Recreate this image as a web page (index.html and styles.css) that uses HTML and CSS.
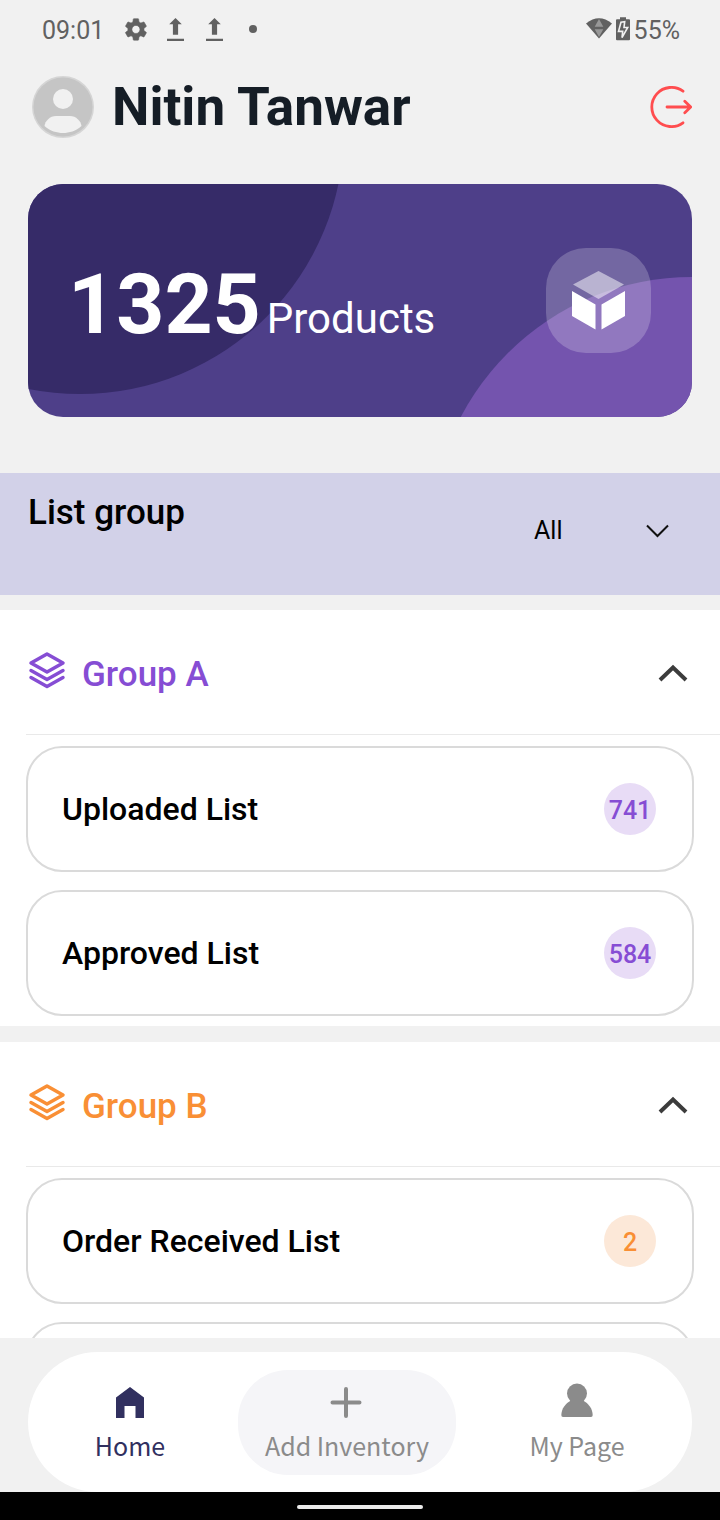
FILE: index.html
```html
<!DOCTYPE html>
<html lang="en">
<head>
<meta charset="utf-8">
<meta name="viewport" content="width=device-width, initial-scale=1">
<title>Inventory</title>
<link rel="stylesheet" href="styles.css">
</head>
<body>
<div class="app">
  <div class="status">
    <span class="status-time">09:01</span>
    <div class="status-icons">
      <svg class="status-icon" viewBox="0 0 26 26" aria-hidden="true"><path transform="translate(-.5 -2) scale(1.12)" fill="currentColor" stroke="currentColor" stroke-width=".5" d="M19.14 12.94c.04-.3.06-.61.06-.94 0-.32-.02-.64-.07-.94l2.03-1.58a.49.49 0 0 0 .12-.61l-1.92-3.32a.488.488 0 0 0-.59-.22l-2.39.96c-.5-.38-1.03-.7-1.62-.94l-.36-2.54a.484.484 0 0 0-.48-.41h-3.84c-.24 0-.43.17-.47.41l-.36 2.54c-.59.24-1.13.57-1.62.94l-2.39-.96c-.22-.08-.47 0-.59.22L2.740 8.870c-.12.21-.08.47.12.61l2.030 1.580c-.05.3-.09.63-.09.94s.02.64.07.94l-2.030 1.580a.49.49 0 0 0-.12.61l1.920 3.320c.12.22.37.29.59.22l2.390-.96c.5.38 1.030.7 1.620.94l.36 2.540c.05.24.24.41.48.41h3.840c.24 0 .44-.17.47-.41l.36-2.540c.59-.24 1.130-.56 1.620-.94l2.390.96c.22.08.47 0 .59-.22l1.920-3.320c.12-.22.07-.47-.12-.61l-2.010-1.580zM12 15.600c-1.980 0-3.600-1.620-3.600-3.600s1.620-3.600 3.600-3.600 3.600 1.620 3.600 3.600-1.620 3.600-3.600 3.600z"/></svg>
      <svg class="status-icon" viewBox="0 0 26 26" aria-hidden="true"><path fill="currentColor" d="M13.500 0l6.300 6.200h-3.700v10.600h-5.200V6.200H7.200zM5 20.700h17v2.200H5z"/></svg>
      <svg class="status-icon" viewBox="0 0 26 26" aria-hidden="true"><path fill="currentColor" d="M13.500 0l6.300 6.200h-3.700v10.600h-5.200V6.200H7.200zM5 20.700h17v2.200H5z"/></svg>
      <svg class="status-icon" viewBox="0 0 26 26" aria-hidden="true"><circle cx="13" cy="11" r="4" fill="currentColor"/></svg>
    </div>
    <div class="status-right">
      <svg class="wifi" viewBox="0 0 26 26" aria-hidden="true"><path fill="currentColor" d="M0 5.500Q13-5 26 5.500L13 20.500z"/><path fill="#989898" d="M13 1l4.300 7.700H8.700zM8.700 11.200h8.600L13 19z"/></svg>
      <svg class="battery" viewBox="0 0 14 26" aria-hidden="true"><path fill="currentColor" d="M4-.8h6v2h3q1 0 1 1v19q0 1-1 1H1q-1 0-1-1v-19q0-1 1-1h3z"/><path fill="none" stroke="#f1f1f1" stroke-width="1.600" d="M8.700 3.700L8 9.500h3.700L6 19.700l.7-6.300H2.500L5 4.200z"/></svg>
      <span>55%</span>
    </div>
  </div>

  <header class="header">
    <svg class="avatar" viewBox="0 0 62 62" aria-hidden="true"><circle cx="31" cy="31" r="31" fill="#d5d5d5"/><circle cx="31" cy="31" r="29.500" fill="#c5c5c5"/><circle cx="31" cy="23" r="10" fill="#f1f1f1"/><path fill="#f1f1f1" d="M24 40h14c6 0 11 5 11.500 10C44 55 37 57 31 57s-13-2-18.500-7C13 45 18 40 24 40z"/></svg>
    <h1 class="name">Nitin Tanwar</h1>
    <button class="logout" type="button" aria-label="Log out">
      <svg viewBox="0 0 42 42" fill="none" stroke="#ff4d4f" stroke-width="2.800" stroke-linecap="round" stroke-linejoin="round" aria-hidden="true"><path d="M33 5.200A19.600 19.600 0 1 0 33 36.800M17 21h23.500M34.800 15.300l5.900 5.700-5.900 5.700"/></svg>
    </button>
  </header>

  <section class="summary">
    <p class="summary-text"><strong class="summary-count">1325</strong><span class="summary-unit">Products</span></p>
    <div class="summary-icon">
      <svg viewBox="0 0 54 60" aria-hidden="true"><path fill="#fff" fill-opacity=".5" d="M26.500 0l25.500 13.500L26.500 28 1 13.500z"/><path fill="#fff" d="M0 20l23.500 13.500V58.500L0 45zM53 20L29.500 33.500v25L53 45z"/></svg>
    </div>
  </section>

  <div class="filter">
    <label class="filter-label" for="group-filter">List group</label>
    <div class="filter-control">
      <select class="filter-select" id="group-filter"><option>All</option></select>
      <svg class="filter-arrow" viewBox="0 0 24 14" fill="none" stroke="#111" stroke-width="2" aria-hidden="true"><path d="M2 1.500l10.500 10.500L23 1.500"/></svg>
    </div>
  </div>

  <main class="groups">
    <section class="group group-purple">
      <h2 class="group-title">
        <button class="group-toggle" type="button" aria-expanded="true">
          <svg class="layers" viewBox="0 0 36 38" fill="none" stroke="currentColor" stroke-width="3.500" stroke-linecap="round" stroke-linejoin="round" aria-hidden="true"><path d="M18 2L34 11 18 20 2 11zM2 18.500l16 9 16-9M2 25.500l16 9 16-9"/></svg>
          <span>Group A</span>
          <svg class="chevron" viewBox="0 0 30 18" fill="none" stroke="#3c3c3c" stroke-width="4" aria-hidden="true"><path d="M2 14L15 1.500 28 14"/></svg>
        </button>
      </h2>
      <ul class="cards">
        <li><button class="card" type="button"><span>Uploaded List</span><span class="badge">741</span></button></li>
        <li><button class="card" type="button"><span>Approved List</span><span class="badge">584</span></button></li>
      </ul>
    </section>
    <section class="group group-orange">
      <h2 class="group-title">
        <button class="group-toggle" type="button" aria-expanded="true">
          <svg class="layers" viewBox="0 0 36 38" fill="none" stroke="currentColor" stroke-width="3.500" stroke-linecap="round" stroke-linejoin="round" aria-hidden="true"><path d="M18 2L34 11 18 20 2 11zM2 18.500l16 9 16-9M2 25.500l16 9 16-9"/></svg>
          <span>Group B</span>
          <svg class="chevron" viewBox="0 0 30 18" fill="none" stroke="#3c3c3c" stroke-width="4" aria-hidden="true"><path d="M2 14L15 1.500 28 14"/></svg>
        </button>
      </h2>
      <ul class="cards">
        <li><button class="card" type="button"><span>Order Received List</span><span class="badge">2</span></button></li>
        <li><div class="card"></div></li>
      </ul>
    </section>
  </main>

  <nav class="tabs">
    <div class="tabs-inner">
      <a class="tab tab-active" href="#home">
        <svg class="tab-icon" viewBox="0 0 36 36" aria-hidden="true"><path fill="currentColor" d="M18 2l14 10.500V33h-8.500V21h-11v12H4V12.500z"/></svg>
        <span>Home</span>
      </a>
      <a class="tab tab-add" href="#add">
        <svg class="tab-icon" viewBox="0 0 36 36" fill="none" stroke="currentColor" stroke-width="4" stroke-linecap="round" aria-hidden="true"><path d="M17 4v27M3.500 17.500h27"/></svg>
        <span>Add Inventory</span>
      </a>
      <a class="tab" href="#me">
        <svg class="tab-icon" viewBox="0 0 36 36" fill="currentColor" aria-hidden="true"><circle cx="18" cy="8.500" r="10"/><path d="M12 15.500h12c5.500 3 9.500 8 9.700 14.500q0 2-1.700 2H4q-1.700 0-1.700-2C2.500 23.500 6.500 18.500 12 15.500z"/></svg>
        <span>My Page</span>
      </a>
    </div>
  </nav>
  <div class="system-bar"><div class="system-handle"></div></div>
</div>
</body>
</html>
```
FILE: styles.css
```css
* { box-sizing: border-box; }

body {
  margin: 0;
  background: #f1f1f1;
  color: #000;
  font-family: Roboto, "Liberation Sans", sans-serif;
}

button {
  border: 0;
  padding: 0;
  background: none;
  font: inherit;
  color: inherit;
  text-align: left;
}

svg { display: block; }

.app {
  display: flex;
  flex-direction: column;
  height: 100vh;
}

/* Status bar */
.status {
  display: flex;
  align-items: center;
  flex: none;
  height: 60px;
  padding: 2px 40px 0 42px;
  color: #616161;
  font-size: 25px;
  line-height: 30px;
}

.status-icons { display: flex; gap: 13px; margin-left: 19px; }
.status-icon { width: 26px; height: 26px; }
.status-right { display: flex; align-items: center; gap: 4px; margin-left: auto; }
.wifi { width: 26px; height: 26px; }
.battery { width: 14px; height: 26px; overflow: visible; }

/* Header */
.header {
  display: flex;
  align-items: center;
  flex: none;
  height: 94px;
  padding: 0 28px 0 32px;
}

.avatar { width: 62px; height: 62px; margin-right: 18px; }
.name { margin: 0; color: #151d26; font-size: 53px; font-weight: 700; line-height: 62px; }
.logout { width: 42px; height: 42px; margin-left: auto; }

/* Summary card */
.summary {
  position: relative;
  display: flex;
  align-items: center;
  justify-content: space-between;
  flex: none;
  height: 233px;
  margin: 30px 28px 56px;
  padding: 0 41px 0 40px;
  overflow: hidden;
  border-radius: 35px;
  background: #4e3f89;
  color: #fff;
}

.summary::before,
.summary::after {
  content: "";
  position: absolute;
  border-radius: 50%;
}

.summary::before {
  left: -212px;
  bottom: 23px;
  width: 528px;
  height: 528px;
  background: #362b68;
}

.summary::after {
  right: -261px;
  top: 93px;
  width: 522px;
  height: 522px;
  background: #7454ae;
}

.summary-text { z-index: 1; margin: 0; padding-top: 8px; }
.summary-count { font-size: 84px; line-height: 98px; }
.summary-unit { margin-left: 6px; font-size: 42px; }

.summary-icon {
  z-index: 1;
  display: flex;
  align-items: center;
  justify-content: center;
  width: 105px;
  height: 105px;
  border-radius: 40px;
  background: rgba(255, 255, 255, .21);
}

.summary-icon svg { width: 54px; height: 60px; }

/* Filter bar */
.filter {
  display: flex;
  align-items: flex-start;
  justify-content: space-between;
  flex: none;
  padding: 18px 28px 24px;
  background: #d2d1e8;
}

.filter-label { padding-top: 1px; font-size: 35px; font-weight: 500; line-height: 42px; }
.filter-control { position: relative; width: 172px; }

.filter-select {
  width: 100%;
  height: 80px;
  padding: 0 14px;
  appearance: none;
  border: 0;
  background: none;
  color: #000;
  font: 25px/32px Roboto, "Liberation Sans", sans-serif;
}

.filter-arrow {
  position: absolute;
  top: 33px;
  right: 23px;
  width: 24px;
  height: 14px;
  pointer-events: none;
}

/* Groups */
.groups {
  display: flex;
  flex-direction: column;
  flex: 1 1 0;
  gap: 16px;
  min-height: 0;
  margin-top: 15px;
  overflow: hidden;
}

.group { flex: none; padding-left: 26px; background: #fff; }
.group-purple { --accent: #864dd4; --tint: #e8dcf6; }
.group-orange { --accent: #f98f35; --tint: #fce8d8; }
.group-title { margin: 0; font-size: 35px; font-weight: 500; line-height: 42px; }

.group-toggle {
  display: flex;
  align-items: center;
  width: 100%;
  height: 125px;
  padding: 5px 32px 0 3px;
  border-bottom: 1px solid #e9e9e9;
  color: var(--accent);
}

.layers { width: 36px; height: 38px; margin: 0 17px 8px 0; overflow: visible; }
.chevron { width: 30px; height: 18px; margin-left: auto; overflow: visible; }

.cards {
  display: flex;
  flex-direction: column;
  gap: 18px;
  margin: 0;
  padding: 11px 26px 10px 0;
  list-style: none;
}

.card {
  display: flex;
  align-items: center;
  justify-content: space-between;
  width: 100%;
  height: 126px;
  padding: 0 36px 0 34px;
  border: 2px solid #dadada;
  border-radius: 36px;
  background: #fff;
  font-size: 32px;
  font-weight: 500;
  line-height: 40px;
}

.badge {
  width: 52px;
  height: 52px;
  border-radius: 50%;
  background: var(--tint);
  color: var(--accent);
  font-size: 25px;
  line-height: 56px;
  text-align: center;
}

/* Bottom tabs */
.tabs { flex: none; padding: 14px 28px 0; }

.tabs-inner {
  display: grid;
  grid-template-columns: 204fr 230fr 230fr;
  align-items: center;
  height: 140px;
  border-radius: 70px;
  background: #fff;
}

.tab {
  display: flex;
  flex-direction: column;
  align-items: center;
  justify-content: center;
  gap: 5px;
  height: 105px;
  margin: 0 6px;
  padding-top: 5px;
  color: #8b8b8b;
  font-family: "Noto Sans CJK KR", "Noto Sans", sans-serif;
  font-size: 25px;
  line-height: 38px;
  text-decoration: none;
}

.tab-active { color: #31305f; }
.tab-add { border-radius: 50px; background: #f5f5f8; }
.tab-icon { width: 36px; height: 36px; overflow: visible; }

/* System navigation */
.system-bar {
  display: flex;
  align-items: center;
  justify-content: center;
  flex: none;
  height: 28px;
  padding-top: 2px;
  background: #000;
}

.system-handle { width: 126px; height: 4px; border-radius: 2px; background: #ebebeb; }
```
